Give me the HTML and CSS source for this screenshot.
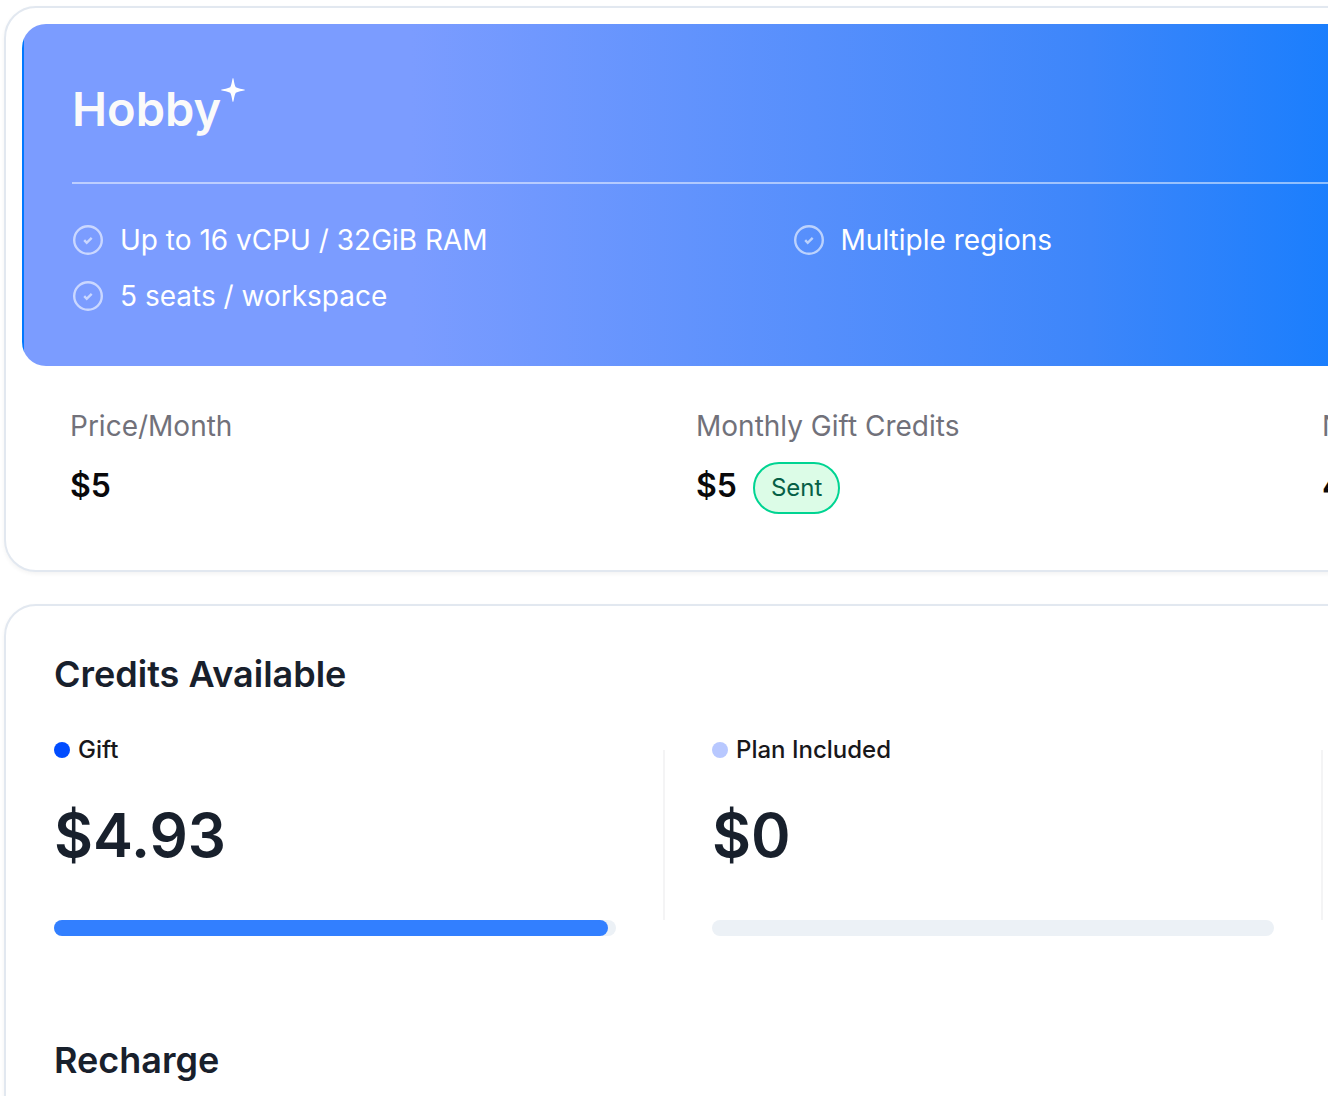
FILE: index.html
```html
<!doctype html>
<html lang="en">
    <head>
        <meta charset="UTF-8" />
        <meta name="viewport" content="width=device-width, initial-scale=1.0" />
        <title>Plan and Credits</title>
        <link rel="stylesheet" href="styles.css" />
    </head>
    <body>
        <svg class="sprite" aria-hidden="true">
            <symbol id="icon-check" viewBox="0 0 32 32">
                <circle cx="16" cy="16" r="13.8" />
                <path d="M12.2 16.2l2.5 2.600 5-5" />
            </symbol>
        </svg>
        <main class="page">
            <section class="card plan">
                <div class="banner">
                    <h1 class="plan-name">
                        Hobby
                        <svg class="sparkle" viewBox="0 0 24 24" aria-hidden="true">
                            <path d="M12 0C12.800 0 13 6 14.800 9.200C18 11 24 11.200 24 12C24 12.800 18 13 14.800 14.800C13 18 12.800 24 12 24C11.200 24 11 18 9.200 14.800C6 13 0 12.800 0 12C0 11.200 6 11 9.200 9.200C11 6 11.200 0 12 0Z" />
                        </svg>
                    </h1>
                    <ul class="features">
                        <li>
                            <svg class="check"><use href="#icon-check" /></svg>
                            Up to 16 vCPU / 32GiB RAM
                        </li>
                        <li>
                            <svg class="check"><use href="#icon-check" /></svg>
                            Multiple regions
                        </li>
                        <li>
                            <svg class="check"><use href="#icon-check" /></svg>
                            5 seats / workspace
                        </li>
                    </ul>
                </div>
                <dl class="stats">
                    <div>
                        <dt>Price/Month</dt>
                        <dd>$5</dd>
                    </div>
                    <div>
                        <dt>Monthly Gift Credits</dt>
                        <dd>$5 <span class="badge">Sent</span></dd>
                    </div>
                    <div>
                        <dt>N</dt>
                        <dd>4</dd>
                    </div>
                </dl>
            </section>

            <section class="card credits">
                <h2>Credits Available</h2>
                <div class="credit-grid">
                    <div class="credit">
                        <div class="credit-label"><span class="dot dot-gift"></span>Gift</div>
                        <div class="amount">$4.93</div>
                        <div class="bar"><div class="bar-fill" style="width: 98.6%"></div></div>
                    </div>
                    <div class="divider"></div>
                    <div class="credit">
                        <div class="credit-label"><span class="dot dot-plan"></span>Plan Included</div>
                        <div class="amount">$0</div>
                        <div class="bar"></div>
                    </div>
                    <div class="divider"></div>
                    <div class="credit"></div>
                </div>
                <h2>Recharge</h2>
            </section>
        </main>
    </body>
</html>
```

FILE: styles.css
```css
* {
    box-sizing: border-box;
}
body {
    margin: 0;
    background: #fff;
    color: #18202c;
    font-family: Inter, "Liberation Sans", sans-serif;
    overflow: hidden;
}
h1,
h2,
ul,
dl,
dd {
    margin: 0;
    padding: 0;
}
.sprite {
    display: none;
}
/* wider than the window, the right side scrolls out of view */
.page {
    width: calc(150vw - 10px);
    height: 100vh;
    padding: 6px 0 0 4px;
    overflow: hidden;
}
.card {
    border: 2px solid #e2e8f0;
    border-radius: 32px;
    background: #fff;
    box-shadow: 0 2px 4px rgba(0, 0, 0, 0.05);
}
.plan {
    padding: 16px 16px 56px;
    margin-bottom: 32px;
}
.banner {
    padding: 48px;
    border: 2px solid transparent;
    border-radius: 24px;
    background: linear-gradient(90deg, #7b9cff 20%, #3d86fa 55%, #0078ff 77%);
    color: #fff;
}
.plan-name {
    display: flex;
    padding-bottom: 38px;
    border-bottom: 2px solid rgba(255, 255, 255, 0.5);
    font-size: 47px;
    font-weight: 600;
    line-height: 70px;
    color: #fafafa;
}
.sparkle {
    width: 24px;
    height: 24px;
    margin-top: 4px;
    fill: #fff;
}
.features {
    display: grid;
    grid-template-columns: repeat(2, 1fr);
    gap: 16px 32px;
    width: 76.5%;
    padding-top: 36px;
    list-style: none;
    font-size: 28px;
    line-height: 40px;
}
.features li {
    display: flex;
    align-items: center;
    gap: 16px;
}
.check {
    width: 32px;
    height: 32px;
    fill: none;
    stroke: #fff;
    stroke-width: 2.4;
    opacity: 0.6;
}
.stats {
    display: grid;
    grid-template-columns: repeat(3, 1fr);
    gap: 32px;
    padding: 40px 48px 0;
}
.stats dt {
    font-size: 28px;
    line-height: 40px;
    color: #71717a;
}
.stats dd {
    display: flex;
    gap: 16px;
    height: 52px;
    margin-top: 16px;
    font-size: 32px;
    font-weight: 600;
    line-height: 48px;
    color: #09090b;
}
.badge {
    padding: 8px 16px;
    border: 2px solid #00d492;
    border-radius: 26px;
    background: #dcfce7;
    color: #065f46;
    font-size: 24px;
    font-weight: 400;
    line-height: 32px;
}
.credits {
    min-height: 600px;
    padding: 48px;
}
.credits h2 {
    font-size: 36px;
    font-weight: 600;
    line-height: 40px;
}
.credit-grid {
    display: grid;
    grid-template-columns: 1fr 2px 1fr 2px 1fr;
    column-gap: 47px;
    margin: 40px 0 104px;
}
.divider {
    margin: 16px 0;
    background: #f4f4f5;
}
.credit-label {
    display: flex;
    align-items: center;
    gap: 8px;
    font-size: 24px;
    font-weight: 500;
    line-height: 32px;
    color: #18181b;
}
.dot {
    width: 16px;
    height: 16px;
    border-radius: 50%;
}
.dot-gift {
    background: #004cff;
}
.dot-plan {
    background: #b8c8ff;
}
.amount {
    margin: 32px 0 48px;
    font-size: 60px;
    font-weight: 600;
    line-height: 74px;
}
.bar {
    height: 16px;
    border-radius: 8px;
    background: #ecf1f6;
}
.bar-fill {
    height: 100%;
    border-radius: 8px;
    background: #327fff;
}
```
